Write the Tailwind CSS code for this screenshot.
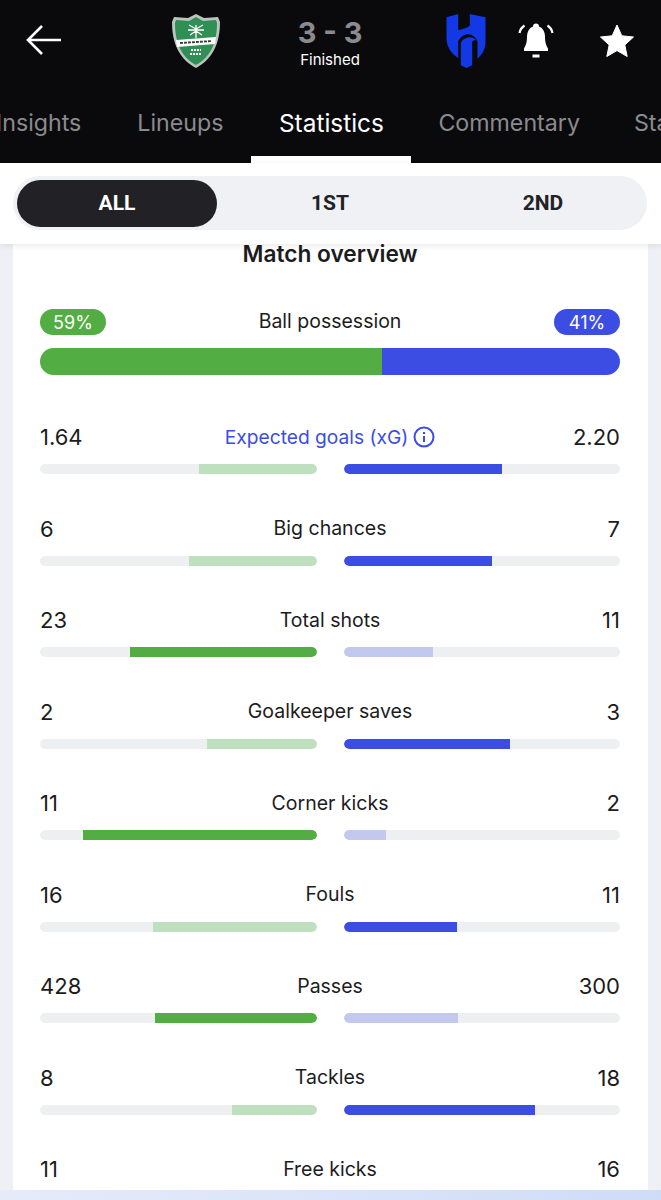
<!DOCTYPE html>
<html>

<head>
    <meta charset='UTF-8'>
    <meta name='viewport' content='width=device-width, initial-scale=1.0'>
    <title>Match statistics</title>
    <script src="https://cdn.jsdelivr.net/npm/@tailwindcss/browser@4"></script>
</head>

<body class='bg-[#eef0f5] font-[Inter,sans-serif] text-[#1c1c20] h-[1200px] w-[661px] overflow-hidden relative'>

    <!-- header -->
    <div class='bg-[#0a0a0c] h-[163px] overflow-hidden'>
        <div class='flex items-center h-[81px]'>
            <svg class='ml-[26px] mt-[-1px] w-[36px] h-[32px] shrink-0' viewBox='0 0 36 32' fill='none' stroke='white' stroke-width='2.6'>
                <path d='M16 2 L2 16 L16 30 M2 16 H35' />
            </svg>
            <svg class='ml-[109px] w-[50px] h-[56px] shrink-0' viewBox='0 0 50 56'>
                <path d='M25 1 L33 5 L47 4 L49 9 C49 30 42 46 25 55 C8 46 1 30 1 9 L3 4 L17 5 Z' fill='#b9c4bd' />
                <path d='M25 4 L32 8 L45 7 L46 10 C46 29 40 44 25 52 C10 44 4 29 4 10 L5 7 L18 8 Z' fill='#2f8f55' />
                <path d='M25 12 V25 M25 16 L18 12 M25 16 L32 12 M25 17 L17 17 M25 17 L33 17 M25 18 L19 22 M25 18 L31 22' stroke='white' stroke-width='1.300' fill='none' />
                <path d='M5 27 L45 24 L44 31 L6 34 Z' fill='white' />
                <path d='M9 30 L41 28' stroke='#3a3f3c' stroke-width='1.800' stroke-dasharray='3 1' fill='none' />
                <path d='M20 37 H30 M19 41 H31' stroke='white' stroke-width='1.800' stroke-dasharray='2 1' fill='none' />
            </svg>
            <div class='w-[218px] shrink-0 flex flex-col items-center mt-[3px]'>
                <div class='text-[#8b8b8f] font-bold text-[29px] leading-[36px]'>3 - 3</div>
                <div class='text-white text-[15px] leading-[20px] mt-[-1px]'>Finished</div>
            </div>
            <svg class='ml-[6px] w-[42px] h-[55px] shrink-0' viewBox='15 15 117 165' fill='#1338e6'>
                <path d='M15 28 L50 18 V66 C60 64 78 62 85 52 V18 L132 28 V100 C132 125 122 140 108 152 V100 C100 80 70 65 50 100 V150 C28 135 15 115 15 90 Z' />
                <path d='M58 104 C66 88 90 80 106 98 C98 95 94 98 92 102 V172 L75 180 L58 172 Z' />
            </svg>
            <svg class='ml-[31px] w-[36px] h-[36px] shrink-0' viewBox='0 0 36 36' fill='white'>
                <path d='M18 0.500 C20 0.500 21 1.500 21 3.500 C25 5 27 9 27 14 C27 20 28.500 23 30 25.500 V28 H6 V25.500 C7.500 23 9 20 9 14 C9 9 11 5 15 3.500 C15 1.500 16 0.500 18 0.500 Z' />
                <rect x='14.500' y='31.500' width='7' height='3' />
                <path d='M1.500 10 C2 7 3.500 4.500 6.500 2.500 M34.500 10 C34 7 32.500 4.500 29.500 2.500' fill='none' stroke='white' stroke-width='2.200' />
            </svg>
            <svg class='ml-[46px] w-[34px] h-[34px] shrink-0' viewBox='0 0 34 34' fill='white'>
                <path d='M17 1 L21.800 11.800 L33.500 13 L24.800 21 L27.200 32.500 L17 26.600 L6.800 32.500 L9.200 21 L0.500 13 L12.200 11.800 Z' stroke='white' stroke-linejoin='round' />
            </svg>
        </div>
        <div class='flex h-[82px] ml-[-32px] w-max'>
            <div class='px-[28px] pt-[23px] text-[23.2px] leading-[38px] text-[#8b8b8f]'>Insights</div>
            <div class='px-[28px] pt-[23px] text-[23.2px] leading-[38px] text-[#8b8b8f]'>Lineups</div>
            <div class='w-[160px] text-center pt-[23px] text-[24.400px] leading-[38px] text-white border-b-[7px] border-white'>Statistics</div>
            <div class='px-[27px] pt-[23px] text-[23.2px] leading-[38px] text-[#8b8b8f]'>Commentary</div>
            <div class='px-[27px] pt-[23px] text-[23.2px] leading-[38px] text-[#8b8b8f]'>Standings</div>
        </div>
    </div>

    <!-- period switch -->
    <div class='bg-white h-[81px] px-[13px] pt-[13px] shadow-[0_2px_6px_rgba(0,0,0,0.08)] relative z-10'>
        <div class='bg-[#f0f1f5] h-[54px] rounded-[27px] w-[634px] flex items-center gap-[13px] pl-[4px] font-[Roboto,sans-serif] font-bold text-[21px] pt-[1px]'>
            <div class='w-[200px] h-[47px] rounded-[24px] bg-[#222226] text-white flex items-center justify-center'>ALL</div>
            <div class='w-[200px] text-center text-[#222226]'>1ST</div>
            <div class='w-[200px] text-center text-[#222226]'>2ND</div>
        </div>
    </div>

    <!-- statistics card -->
    <div class='bg-white w-[635px] ml-[13px] h-[946px] pl-[27px] pr-[28px] overflow-hidden'>
        <h2 class='text-center font-semibold text-[22.700px] leading-[20px]'>Match overview</h2>

        <div class='flex justify-between items-center mt-[44px] h-[28px] text-[19.500px]'>
            <span class='bg-[#52ad43] text-white rounded-[14px] w-[66px] h-[26px] flex items-center justify-center text-[18px]'>59%</span>
            <span>Ball possession</span>
            <span class='bg-[#3c4de4] text-white rounded-[14px] w-[66px] h-[26px] flex items-center justify-center text-[18px]'>41%</span>
        </div>
        <div class='flex h-[27px] rounded-[14px] overflow-hidden mt-[12px]'>
            <div class='bg-[#52ad43] w-[342px]'></div>
            <div class='bg-[#3c4de4] flex-1'></div>
        </div>

        <div class='mt-[46px] flex flex-col gap-[38.500px] text-[19.500px]'>
            <div>
                <div class='grid grid-cols-[1fr_auto_1fr] items-center h-[30px]'>
                    <span class='text-[22px]'>1.64</span>
                    <span class='text-[19.200px] text-[#3c4de4] flex items-center gap-[5px]'>Expected goals (xG)
                        <svg class='w-[22px] h-[22px]' viewBox='0 0 22 22' fill='none' stroke='#3c4de4' stroke-width='2'><circle cx='11' cy='11' r='9.500' /><path d='M11 10 V16' /><path d='M11 6 V8' /></svg>
                    </span>
                    <span class='text-[22px] text-right'>2.20</span>
                </div>
                <div class='flex justify-between mt-[13px]'>
                    <div class='w-[277px] h-[10px] rounded-[5px] bg-[#eeeff1] flex justify-end overflow-hidden'><div class='w-[118px] bg-[#bfe0bf] rounded-r-[5px]'></div></div>
                    <div class='w-[276px] h-[10px] rounded-[5px] bg-[#eeeff1] overflow-hidden'><div class='w-[158px] h-full bg-[#3c4de4] rounded-l-[5px]'></div></div>
                </div>
            </div>
            <div>
                <div class='grid grid-cols-[1fr_auto_1fr] items-center h-[30px]'>
                    <span class='text-[22px]'>6</span><span>Big chances</span><span class='text-[22px] text-right'>7</span>
                </div>
                <div class='flex justify-between mt-[13px]'>
                    <div class='w-[277px] h-[10px] rounded-[5px] bg-[#eeeff1] flex justify-end overflow-hidden'><div class='w-[128px] bg-[#bfe0bf] rounded-r-[5px]'></div></div>
                    <div class='w-[276px] h-[10px] rounded-[5px] bg-[#eeeff1] overflow-hidden'><div class='w-[148px] h-full bg-[#3c4de4] rounded-l-[5px]'></div></div>
                </div>
            </div>
            <div>
                <div class='grid grid-cols-[1fr_auto_1fr] items-center h-[30px]'>
                    <span class='text-[22px]'>23</span><span>Total shots</span><span class='text-[22px] text-right'>11</span>
                </div>
                <div class='flex justify-between mt-[13px]'>
                    <div class='w-[277px] h-[10px] rounded-[5px] bg-[#eeeff1] flex justify-end overflow-hidden'><div class='w-[187px] bg-[#52ad43] rounded-r-[5px]'></div></div>
                    <div class='w-[276px] h-[10px] rounded-[5px] bg-[#eeeff1] overflow-hidden'><div class='w-[89px] h-full bg-[#c2c8ee] rounded-l-[5px]'></div></div>
                </div>
            </div>
            <div>
                <div class='grid grid-cols-[1fr_auto_1fr] items-center h-[30px]'>
                    <span class='text-[22px]'>2</span><span>Goalkeeper saves</span><span class='text-[22px] text-right'>3</span>
                </div>
                <div class='flex justify-between mt-[13px]'>
                    <div class='w-[277px] h-[10px] rounded-[5px] bg-[#eeeff1] flex justify-end overflow-hidden'><div class='w-[110px] bg-[#bfe0bf] rounded-r-[5px]'></div></div>
                    <div class='w-[276px] h-[10px] rounded-[5px] bg-[#eeeff1] overflow-hidden'><div class='w-[166px] h-full bg-[#3c4de4] rounded-l-[5px]'></div></div>
                </div>
            </div>
            <div>
                <div class='grid grid-cols-[1fr_auto_1fr] items-center h-[30px]'>
                    <span class='text-[22px]'>11</span><span>Corner kicks</span><span class='text-[22px] text-right'>2</span>
                </div>
                <div class='flex justify-between mt-[13px]'>
                    <div class='w-[277px] h-[10px] rounded-[5px] bg-[#eeeff1] flex justify-end overflow-hidden'><div class='w-[234px] bg-[#52ad43] rounded-r-[5px]'></div></div>
                    <div class='w-[276px] h-[10px] rounded-[5px] bg-[#eeeff1] overflow-hidden'><div class='w-[42px] h-full bg-[#c2c8ee] rounded-l-[5px]'></div></div>
                </div>
            </div>
            <div>
                <div class='grid grid-cols-[1fr_auto_1fr] items-center h-[30px]'>
                    <span class='text-[22px]'>16</span><span>Fouls</span><span class='text-[22px] text-right'>11</span>
                </div>
                <div class='flex justify-between mt-[13px]'>
                    <div class='w-[277px] h-[10px] rounded-[5px] bg-[#eeeff1] flex justify-end overflow-hidden'><div class='w-[164px] bg-[#bfe0bf] rounded-r-[5px]'></div></div>
                    <div class='w-[276px] h-[10px] rounded-[5px] bg-[#eeeff1] overflow-hidden'><div class='w-[113px] h-full bg-[#3c4de4] rounded-l-[5px]'></div></div>
                </div>
            </div>
            <div>
                <div class='grid grid-cols-[1fr_auto_1fr] items-center h-[30px]'>
                    <span class='text-[22px]'>428</span><span>Passes</span><span class='text-[22px] text-right'>300</span>
                </div>
                <div class='flex justify-between mt-[13px]'>
                    <div class='w-[277px] h-[10px] rounded-[5px] bg-[#eeeff1] flex justify-end overflow-hidden'><div class='w-[162px] bg-[#52ad43] rounded-r-[5px]'></div></div>
                    <div class='w-[276px] h-[10px] rounded-[5px] bg-[#eeeff1] overflow-hidden'><div class='w-[114px] h-full bg-[#c2c8ee] rounded-l-[5px]'></div></div>
                </div>
            </div>
            <div>
                <div class='grid grid-cols-[1fr_auto_1fr] items-center h-[30px]'>
                    <span class='text-[22px]'>8</span><span>Tackles</span><span class='text-[22px] text-right'>18</span>
                </div>
                <div class='flex justify-between mt-[13px]'>
                    <div class='w-[277px] h-[10px] rounded-[5px] bg-[#eeeff1] flex justify-end overflow-hidden'><div class='w-[85px] bg-[#bfe0bf] rounded-r-[5px]'></div></div>
                    <div class='w-[276px] h-[10px] rounded-[5px] bg-[#eeeff1] overflow-hidden'><div class='w-[191px] h-full bg-[#3c4de4] rounded-l-[5px]'></div></div>
                </div>
            </div>
            <div>
                <div class='grid grid-cols-[1fr_auto_1fr] items-center h-[30px]'>
                    <span class='text-[22px]'>11</span><span>Free kicks</span><span class='text-[22px] text-right'>16</span>
                </div>
            </div>
        </div>
    </div>

    <div class='h-[10px] bg-gradient-to-r from-[#e6ebfa] to-[#cfdcf8]'></div>

</body>

</html>
